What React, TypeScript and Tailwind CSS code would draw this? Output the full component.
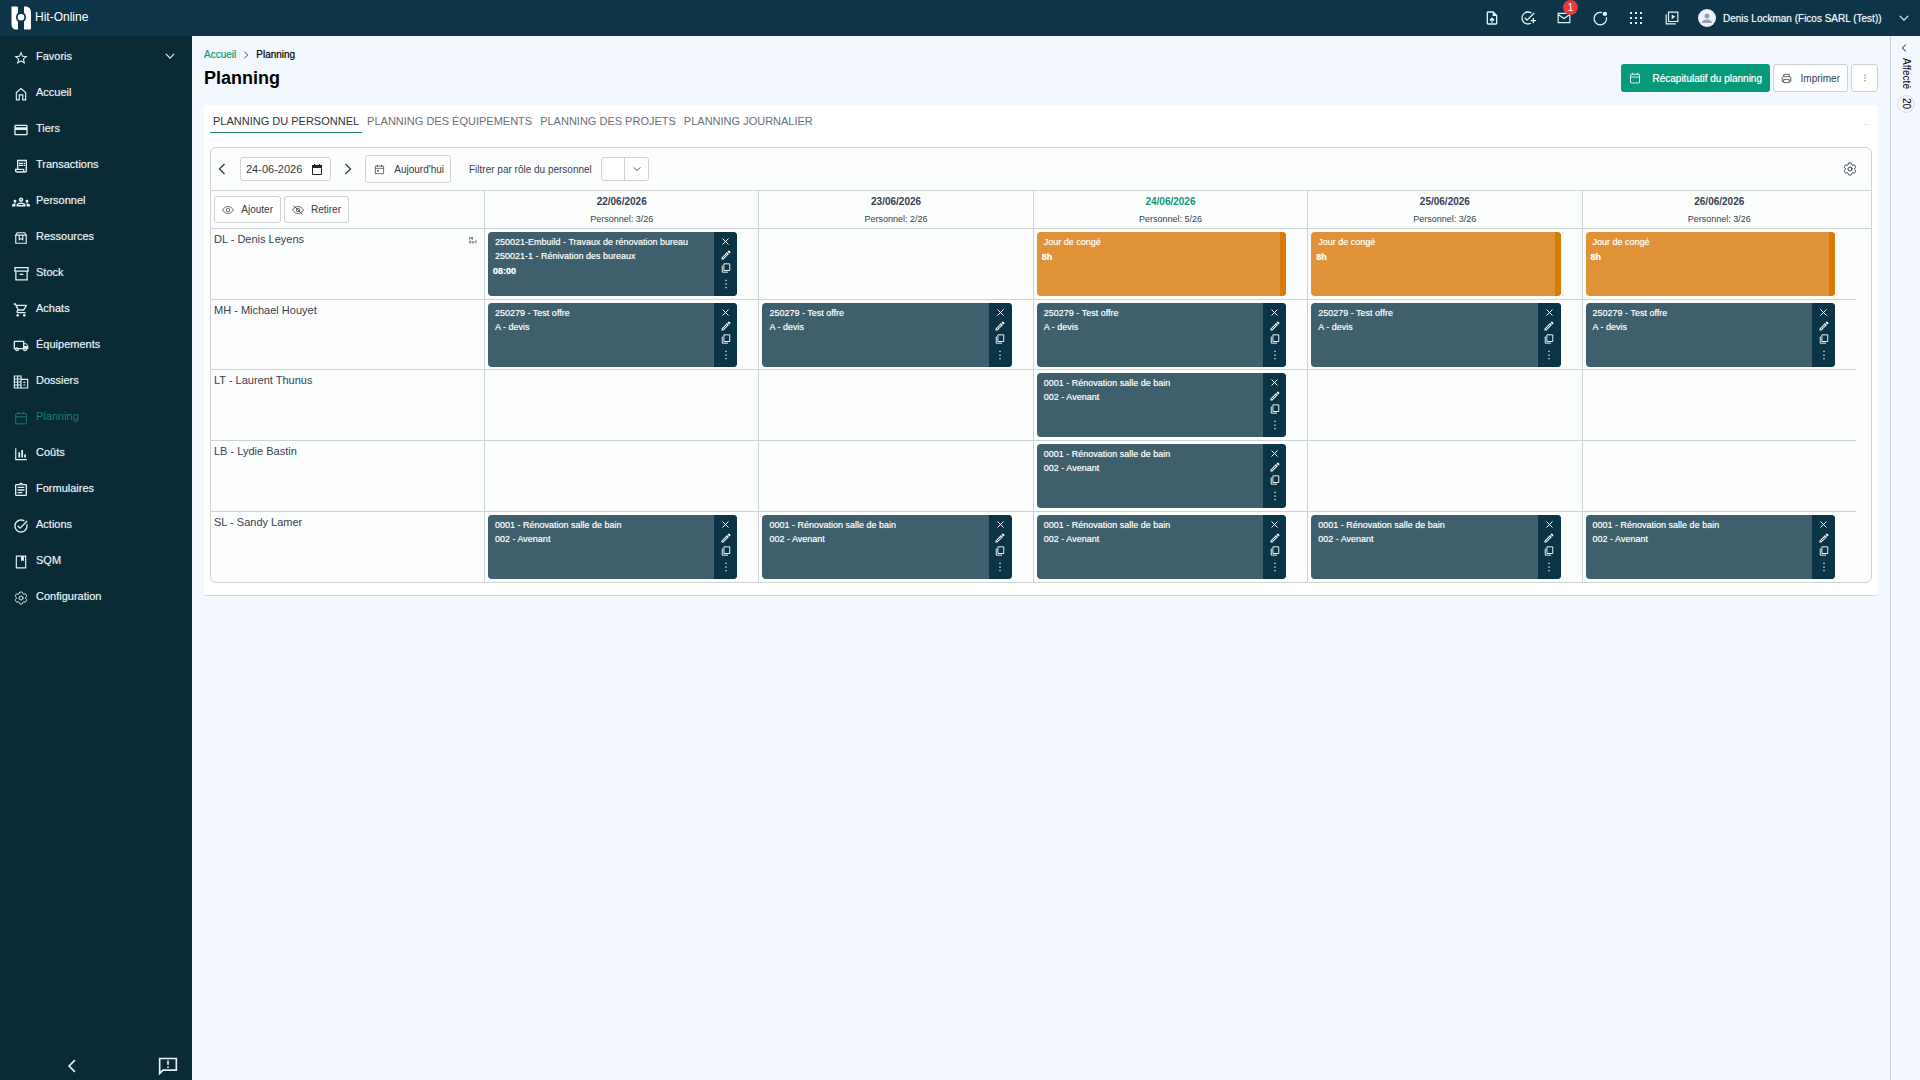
import React from 'react';
import {
  MdStarBorder,
  MdOutlineCreditCard,
  MdOutlineReceiptLong,
  MdOutlineGroups,
  MdOutlineShoppingCart,
  MdOutlineLocalShipping,
  MdOutlineAssignment,
  MdTaskAlt,
  MdOutlineEdit,
  MdOutlineUploadFile,
  MdOutlineAddTask,
} from 'react-icons/md';
import { HiOutlineCog6Tooth } from 'react-icons/hi2';

type IconProps = { className?: string };

function Stroke({ className, children, width = 2 }: IconProps & { children: React.ReactNode; width?: number }) {
  return (
    <svg
      viewBox="0 0 24 24"
      fill="none"
      stroke="currentColor"
      strokeWidth={width}
      className={className}
      aria-hidden="true"
    >
      {children}
    </svg>
  );
}

const HomeIcon = ({ className }: IconProps) => (
  <Stroke className={className}>
    <path d="M4 22V9.5L12 2.5l8 7V22h-5v-8.500H9V22z" />
  </Stroke>
);
const BoxIcon = ({ className }: IconProps) => (
  <Stroke className={className}>
    <path d="M3 6.500V21h18V6.500M3 7l2.500-4h13L21 7zM9 7v8l3-2 3 2V7" />
  </Stroke>
);
const ArchiveIcon = ({ className }: IconProps) => (
  <Stroke className={className}>
    <path d="M1.500 2.500h21v5.500h-21zM3 8v14h18V8M9 13.500h6" />
  </Stroke>
);
const BuildingIcon = ({ className }: IconProps) => (
  <Stroke className={className} width={1.7}>
    <path d="M2 3h10v18H2zM12 8h10v13H12M2 7.500h10M2 12h10M2 16.500h10M7 3v18M15.500 12.500h3M15.500 16.500h3" />
  </Stroke>
);
const CalendarIcon = ({ className }: IconProps) => (
  <Stroke className={className} width={1.7}>
    <path d="M4 4.500h16a1 1 0 0 1 1 1V21a1 1 0 0 1-1 1H4a1 1 0 0 1-1-1V5.500a1 1 0 0 1 1-1zM3 10h18M7.500 1.500v3M16.500 1.500v3" />
  </Stroke>
);
const TodayIcon = ({ className }: IconProps) => (
  <Stroke className={className} width={1.6}>
    <path d="M3 4.500h18V21H3zM3 9.500h18M7.500 1.500v5M16.500 1.500v5" />
    <path d="M7 13h3.500v3.500H7z" fill="currentColor" stroke="none" />
  </Stroke>
);
const ChartIcon = ({ className }: IconProps) => (
  <Stroke className={className}>
    <path d="M3 2v19.500h19" />
    <path d="M9 9v9M14 5v13M19 13v5" strokeWidth="3" />
  </Stroke>
);
const BookIcon = ({ className }: IconProps) => (
  <Stroke className={className}>
    <path d="M4 2h16v20H4z" />
    <path d="M12 2h5v9l-2.500-2L12 11z" fill="currentColor" stroke="none" />
  </Stroke>
);
const EyeIcon = ({ className }: IconProps) => (
  <Stroke className={className} width={1.5}>
    <path d="M1 12c3-5 7-7 11-7s8 2 11 7c-3 5-7 7-11 7s-8-2-11-7z" />
    <circle cx="12" cy="12" r="3.500" />
  </Stroke>
);
const EyeOffIcon = ({ className }: IconProps) => (
  <Stroke className={className} width={1.5}>
    <path d="M1 12c3-5 7-7 11-7s8 2 11 7c-3 5-7 7-11 7s-8-2-11-7zM3 3l18 18" />
    <circle cx="12" cy="12" r="3.500" />
  </Stroke>
);
const PrinterIcon = ({ className }: IconProps) => (
  <Stroke className={className} width={1.7}>
    <path d="M6 8V3h12v5M6 18H2.500v-7a3 3 0 0 1 3-3h13a3 3 0 0 1 3 3v7H18M6 14h12v7H6z" />
  </Stroke>
);
const MailIcon = ({ className }: IconProps) => (
  <Stroke className={className}>
    <path d="M2 4h20v16H2zM2 6l10 7 10-7" />
  </Stroke>
);
const StatusIcon = ({ className }: IconProps) => (
  <Stroke className={className}>
    <path d="M14.500 2.500A10 10 0 1 0 21.500 10" />
    <circle cx="19" cy="4.500" r="3.500" fill="currentColor" stroke="none" />
  </Stroke>
);
const VideoIcon = ({ className }: IconProps) => (
  <Stroke className={className}>
    <path d="M6 2h16v16H6zM2 5.500V22h16.500" />
    <path d="M11.500 6v8l6-4z" fill="currentColor" stroke="none" />
  </Stroke>
);
const GridIcon = ({ className }: IconProps) => (
  <svg viewBox="0 0 12 12" fill="currentColor" className={className} aria-hidden="true">
    {[0, 5, 10].map((y) => [0, 5, 10].map((x) => <rect key={`${x}-${y}`} x={x} y={y} width="2" height="2" />))}
  </svg>
);
const FeedbackIcon = ({ className }: IconProps) => (
  <Stroke className={className}>
    <path d="M2 3h20v14H6l-4 4z" />
    <path d="M12 5.500v5M12 12.500v2" />
  </Stroke>
);
const CopyIcon = ({ className }: IconProps) => (
  <Stroke className={className} width={2.2}>
    <path d="M7 2h14v16H7zM3 6v16h14" />
  </Stroke>
);
const CloseIcon = ({ className }: IconProps) => (
  <Stroke className={className} width={2.6}>
    <path d="M4 4l16 16M20 4L4 20" />
  </Stroke>
);
const DotsIcon = ({ className }: IconProps) => (
  <svg viewBox="0 0 24 24" fill="currentColor" className={className} aria-hidden="true">
    <path d="M10.500 2h3v3h-3zM10.500 10.500h3v3h-3zM10.500 19h3v3h-3z" />
  </svg>
);
const Chevron = ({ className, dir }: IconProps & { dir: 'left' | 'right' | 'down' }) => (
  <Stroke className={className} width={2.8}>
    <path d={dir === 'left' ? 'M17 2L7 12l10 10' : dir === 'right' ? 'M7 2l10 10L7 22' : 'M2 7l10 10L22 7'} />
  </Stroke>
);

const Logo = () => (
  <svg viewBox="0 0 20 24" className="h-6 w-5" aria-hidden="true" fill="#fff">
    <path d="M0.500 0.500h5.500q1 0 1 1V6.800a5.800 5.800 0 0 0 0 8.800v7.900H4q-3.500-1-3.500-5z" />
    <path d="M13 0.500h2.500q4.500 1 4.500 6V22.500q0 1-1 1h-6v-7.900a5.800 5.800 0 0 0 0-8.800z" />
    <circle cx="10" cy="11.200" r="3.300" />
  </svg>
);

const NAV: { label: string; icon: React.ComponentType<IconProps>; size?: string }[] = [
  { label: 'Favoris', icon: MdStarBorder },
  { label: 'Accueil', icon: HomeIcon, size: 'size-3.5' },
  { label: 'Tiers', icon: MdOutlineCreditCard },
  { label: 'Transactions', icon: MdOutlineReceiptLong },
  { label: 'Personnel', icon: MdOutlineGroups, size: 'size-[18px]' },
  { label: 'Ressources', icon: BoxIcon, size: 'size-3.5' },
  { label: 'Stock', icon: ArchiveIcon, size: 'size-[15px]' },
  { label: 'Achats', icon: MdOutlineShoppingCart },
  { label: 'Équipements', icon: MdOutlineLocalShipping },
  { label: 'Dossiers', icon: BuildingIcon, size: 'size-4' },
  { label: 'Planning', icon: CalendarIcon, size: 'size-3.5' },
  { label: 'Coûts', icon: ChartIcon, size: 'size-3.5' },
  { label: 'Formulaires', icon: MdOutlineAssignment },
  { label: 'Actions', icon: MdTaskAlt },
  { label: 'SQM', icon: BookIcon, size: 'size-3.5' },
  { label: 'Configuration', icon: HiOutlineCog6Tooth },
];

const TABS = ['PLANNING DU PERSONNEL', 'PLANNING DES ÉQUIPEMENTS', 'PLANNING DES PROJETS', 'PLANNING JOURNALIER'];

const DAYS = [
  { date: '22/06/2026', count: '3/26' },
  { date: '23/06/2026', count: '2/26' },
  { date: '24/06/2026', count: '5/26', today: true },
  { date: '25/06/2026', count: '3/26' },
  { date: '26/06/2026', count: '3/26' },
];

type Task = { lines: string[]; time?: string; leave?: boolean };

const LEAVE: Task = { lines: ['Jour de congé'], time: '8h', leave: true };
const OFFER: Task = { lines: ['250279 - Test offre', 'A - devis'] };
const BATH: Task = { lines: ['0001 - Rénovation salle de bain', '002 - Avenant'] };
const OFFICE: Task = {
  lines: ['250021-Embuild - Travaux de rénovation bureau', '250021-1 - Rénivation des bureaux'],
  time: '08:00',
};

const ROWS: { name: string; badge?: boolean; height: string; tasks: (Task | null)[] }[] = [
  { name: 'DL - Denis Leyens', badge: true, height: 'h-[71px]', tasks: [OFFICE, null, LEAVE, LEAVE, LEAVE] },
  { name: 'MH - Michael Houyet', height: 'h-[70px]', tasks: [OFFER, OFFER, OFFER, OFFER, OFFER] },
  { name: 'LT - Laurent Thunus', height: 'h-[71px]', tasks: [null, null, BATH, null, null] },
  { name: 'LB - Lydie Bastin', height: 'h-[71px]', tasks: [null, null, BATH, null, null] },
  { name: 'SL - Sandy Lamer', height: 'h-[70px]', tasks: [BATH, BATH, BATH, BATH, BATH] },
];

function TaskCard({ task }: { task: Task }) {
  return (
    <div
      className={`flex h-16 overflow-hidden rounded text-[9px] leading-[14px] text-white ${
        task.leave ? 'bg-[#e09238]' : 'bg-[#3e5f6b]'
      }`}
    >
      <div className="min-w-0 flex-1 pt-[3px] pl-[5px] [text-shadow:0_0_1px_#ffffff99]">
        {task.lines.map((line) => (
          <p key={line} className="truncate pl-0.5">
            {line}
          </p>
        ))}
        {task.time && <p className="pt-px font-bold">{task.time}</p>}
      </div>
      {task.leave ? (
        <div className="w-1.5 bg-[#d87a06]" />
      ) : (
        <div className="flex w-[23px] flex-col items-center bg-[#0b3446] pt-[3px]">
          <button aria-label="Supprimer" className="flex h-[13px] items-center">
            <CloseIcon className="size-[9px]" />
          </button>
          <button aria-label="Modifier" className="flex h-[13px] items-center">
            <MdOutlineEdit className="size-3" />
          </button>
          <button aria-label="Copier" className="flex h-[13px] items-center">
            <CopyIcon className="size-[10px]" />
          </button>
          <button aria-label="Plus" className="mt-[3px] flex h-[13px] items-center">
            <DotsIcon className="size-[10px]" />
          </button>
        </div>
      )}
    </div>
  );
}

const OUTLINE = 'flex items-center rounded-[3px] border border-[#d0d3d6] bg-white text-[#333b45]';

export default function App() {
  return (
    <div className="flex min-h-screen flex-col bg-[#f3f8fe] font-['Liberation_Sans',Arial,sans-serif] text-[11px] text-[#374151]">
      <header className="flex h-9 items-center bg-[#0d3547] pl-[11px] text-white">
        <Logo />
        <span className="pb-0.5 pl-1 text-xs">Hit-Online</span>
        <div className="ml-auto flex items-center text-[#dff3f7]">
          <button aria-label="Importer" className="flex w-9 justify-center">
            <MdOutlineUploadFile className="size-4" />
          </button>
          <button aria-label="Nouvelle tâche" className="flex w-9 justify-center">
            <MdOutlineAddTask className="size-4" />
          </button>
          <button aria-label="Messages" className="relative flex w-9 justify-center">
            <MailIcon className="size-3.5" />
            <span className="absolute -top-[11px] right-1 grid size-[15px] place-items-center rounded-full bg-[#e8393c] text-[10px] leading-none text-white">
              1
            </span>
          </button>
          <button aria-label="Statut" className="flex w-9 justify-center">
            <StatusIcon className="size-[15px]" />
          </button>
          <button aria-label="Applications" className="flex w-9 justify-center">
            <GridIcon className="size-3" />
          </button>
          <button aria-label="Vidéos" className="flex w-9 justify-center">
            <VideoIcon className="size-3.5" />
          </button>
          <button className="flex w-[230px] items-center gap-[7px] pr-[11px] pl-2 text-[#edf6f8]">
            <span className="size-[18px] overflow-hidden rounded-full bg-[#eef2fb]">
              <svg viewBox="0 0 18 18" fill="#9aa1ab" aria-hidden="true">
                <circle cx="9" cy="7" r="2.500" />
                <path d="M4 14q0-3.500 5-3.500t5 3.500z" />
              </svg>
            </span>
            <span className="text-[10px] [text-shadow:0_0_1px_#ffffff99]">Denis Lockman (Ficos SARL (Test))</span>
            <Chevron dir="down" className="ml-auto size-[10px]" />
          </button>
        </div>
      </header>

      <div className="flex flex-1">
        <aside className="flex w-48 flex-col bg-[#0a2a35] text-[#e3f1f5]">
          <nav className="pt-0.5">
            {NAV.map(({ label, icon: Icon, size }) => (
              <a
                key={label}
                href="#"
                className={`flex h-9 items-center pl-3 ${
                  label === 'Planning' ? 'text-[#14806b]' : '[text-shadow:0_0_1px_#ffffff80]'
                }`}
              >
                <span className="mt-[3px] mr-1.5 flex w-[18px] justify-center">
                  <Icon className={size ?? 'size-4'} />
                </span>
                {label}
                {label === 'Favoris' && <Chevron dir="down" className="mr-[17px] ml-auto size-[10px]" />}
              </a>
            ))}
          </nav>
          <div className="mt-auto flex h-7 items-center justify-between pr-[14px] pl-[65px]">
            <button aria-label="Réduire le menu">
              <Chevron dir="left" className="size-3.5" />
            </button>
            <button aria-label="Commentaires">
              <FeedbackIcon className="size-5" />
            </button>
          </div>
        </aside>

        <main className="min-w-0 flex-1 px-3 pt-3">
          <div className="flex justify-between">
            <div>
              <nav aria-label="Fil d'Ariane" className="flex items-center gap-1.5 text-[10px] leading-[14px]">
                <a href="#" className="text-[#12967b] [text-shadow:0_0_1px_#12967b66]">
                  Accueil
                </a>
                <Chevron dir="right" className="size-2" />
                <span className="text-black [text-shadow:0_0_1px_#00000066]">Planning</span>
              </nav>
              <h1 className="pt-1 text-lg leading-6 font-bold text-black">Planning</h1>
            </div>
            <div className="flex items-start gap-[3px] pt-4">
              <button className="flex h-7 w-[149px] items-center justify-between rounded-[3px] bg-[#06997a] px-2 text-[10px] text-white [text-shadow:0_0_1px_#ffffff99]">
                <CalendarIcon className="size-3" />
                Récapitulatif du planning
              </button>
              <button className={`${OUTLINE} h-7 w-[75px] justify-between px-[7px] text-[10px]`}>
                <PrinterIcon className="size-[11px]" />
                Imprimer
              </button>
              <button aria-label="Plus d'options" className={`${OUTLINE} h-7 w-[27px] justify-center`}>
                <DotsIcon className="size-2" />
              </button>
            </div>
          </div>

          <section className="mt-[13px] rounded-[3px] border-b border-[#d3d6d8] bg-white px-1.5 pb-3">
            <div role="tablist" className="flex items-center gap-0.5 pt-1.5">
              {TABS.map((tab, i) => (
                <button
                  key={tab}
                  role="tab"
                  aria-selected={i === 0}
                  className={`h-[22px] border-b px-[3px] ${
                    i === 0 ? 'border-[#1f8672] text-[#2c3540]' : 'border-transparent text-[#6b7075]'
                  }`}
                >
                  {tab}
                </button>
              ))}
              <span className="mt-1 mr-[3px] ml-auto h-px w-1.5 bg-slate-200" />
            </div>

            <div className="mt-[14px] overflow-hidden rounded-md border border-[#d0d3d5] bg-[#fcfdfd]">
              <div className="flex h-[43px] items-center border-b border-[#d0d3d5]">
                <button aria-label="Jour précédent" className="ml-[5px]">
                  <Chevron dir="left" className="size-3" />
                </button>
                <div className={`${OUTLINE} ml-3 h-6 w-[91px] pr-2`}>
                  <input
                    aria-label="Date"
                    defaultValue="24-06-2026"
                    className="w-full min-w-0 bg-transparent pl-[5px] outline-none"
                  />
                  <svg viewBox="0 0 10 11" className="w-[10px] shrink-0" aria-hidden="true">
                    <path d="M0.500 1.500h9v9h-9z" fill="none" stroke="#222" />
                    <path d="M0 1h10v3H0zM2 0h1v2H2zM7 0h1v2H7z" fill="#222" />
                  </svg>
                </div>
                <button aria-label="Jour suivant" className="ml-[11px]">
                  <Chevron dir="right" className="size-3" />
                </button>
                <button className={`${OUTLINE} ml-[11px] h-7 w-[86px] justify-between pr-[6px] pl-2 text-[10px]`}>
                  <TodayIcon className="size-[11px]" />
                  Aujourd'hui
                </button>
                <label htmlFor="role" className="ml-[18px] w-32 text-[10px] whitespace-nowrap">
                  Filtrer par rôle du personnel
                </label>
                <div className="relative ml-1">
                  <select
                    id="role"
                    className="block h-6 w-12 appearance-none rounded-[3px] border border-[#d0d3d6] bg-white"
                  >
                    <option value=""></option>
                  </select>
                  <span className="pointer-events-none absolute inset-y-0 right-0 grid w-[25px] place-items-center border-l border-[#d0d3d6]">
                    <Chevron dir="down" className="size-2" />
                  </span>
                </div>
                <button aria-label="Paramètres" className="mr-[13px] ml-auto">
                  <HiOutlineCog6Tooth className="size-4" />
                </button>
              </div>

              <table className="w-full table-fixed border-separate border-spacing-0">
                <colgroup>
                  <col className="w-[273px]" />
                  {DAYS.map((d) => (
                    <col key={d.date} />
                  ))}
                  <col className="w-[15px]" />
                </colgroup>
                <thead>
                  <tr>
                    <th className="h-[38px] border-b border-[#d0d3d5] p-0 pl-[3px] font-normal">
                      <div className="flex gap-[3px]">
                        <button className={`${OUTLINE} h-[27px] w-[67px] justify-between px-[7px] text-[10px]`}>
                          <EyeIcon className="size-3" />
                          Ajouter
                        </button>
                        <button className={`${OUTLINE} h-[27px] w-[65px] justify-between px-[7px] text-[10px]`}>
                          <EyeOffIcon className="size-3" />
                          Retirer
                        </button>
                      </div>
                    </th>
                    {DAYS.map((d) => (
                      <th key={d.date} className="border-b border-l border-[#d0d3d5] p-0 pt-px font-normal">
                        <div className={`text-[10px] leading-[18px] font-bold ${d.today ? 'text-[#12967b]' : ''}`}>
                          {d.date}
                        </div>
                        <div className="text-[9px] leading-[17px]">Personnel: {d.count}</div>
                      </th>
                    ))}
                    <th className="border-b border-[#d0d3d5] p-0" />
                  </tr>
                </thead>
                <tbody>
                  {ROWS.map((row, i) => {
                    const line = i < ROWS.length - 1 ? 'border-b' : '';
                    return (
                      <tr key={row.name}>
                        <th
                          className={`${line} ${row.height} border-[#d0d3d5] p-0 pt-[3px] pr-[7px] pl-[3px] text-left align-top font-normal`}
                        >
                          <div className="flex justify-between leading-[14px]">
                            {row.name}
                            {row.badge && (
                              <svg
                                viewBox="0 0 8 8"
                                className="mt-1 size-2"
                                fill="none"
                                stroke="#7b8086"
                                aria-hidden="true"
                              >
                                <path
                                  d="M0.500 1v2.500M2 3.500V1l1.500 2.500V1M0.500 5h1.500v2H0.500zM3.500 5v2H5V5M6 5h2M7 5v2.500"
                                  strokeWidth="0.900"
                                />
                              </svg>
                            )}
                          </div>
                        </th>
                        {row.tasks.map((task, j) => (
                          <td
                            key={j}
                            className={`${line} border-l border-[#d0d3d5] p-0 pt-[3px] pr-[21px] pl-[3px] align-top`}
                          >
                            {task && <TaskCard task={task} />}
                          </td>
                        ))}
                        <td className="p-0" />
                      </tr>
                    );
                  })}
                </tbody>
              </table>
            </div>
          </section>
        </main>

        <aside className="flex w-[30px] flex-col items-center border-l border-[#c9ced6] pt-2 text-black">
          <button aria-label="Ouvrir le panneau" className="mr-1">
            <Chevron dir="left" className="size-2" />
          </button>
          <span className="pt-1.5 text-[10px] leading-3 [writing-mode:vertical-rl]">Affecté</span>
          <span className="mt-1.5 flex size-[18px] items-center justify-center rounded-full border border-[#d8dde2] bg-[#f5f7f8] text-[10px] leading-3 [writing-mode:vertical-rl]">
            20
          </span>
        </aside>
      </div>
    </div>
  );
}
